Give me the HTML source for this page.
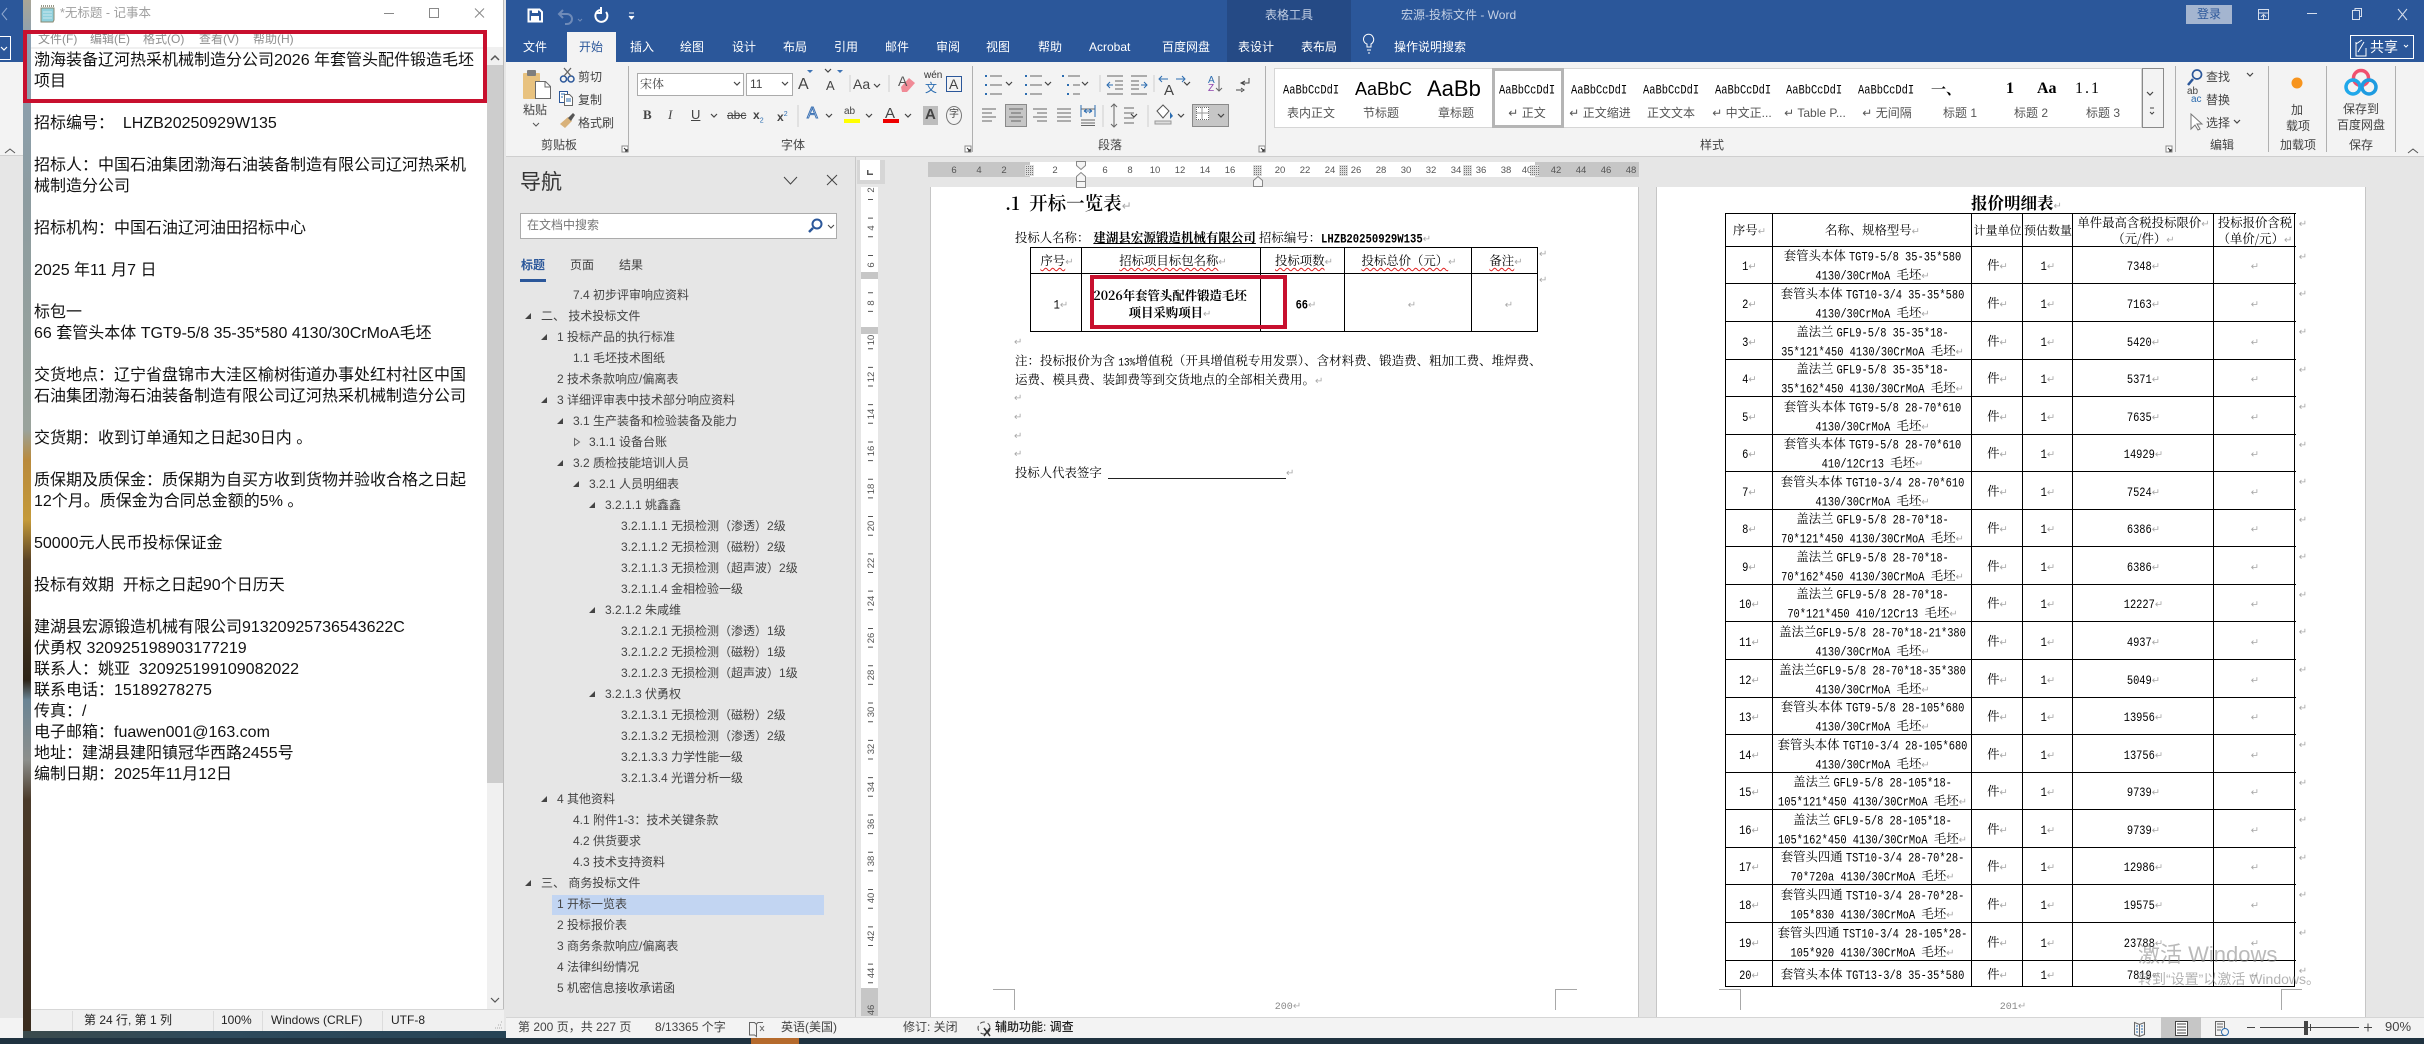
<!DOCTYPE html>
<html lang="zh-CN"><head><meta charset="utf-8"><title>宏源-投标文件 - Word</title>
<style>
*{margin:0;padding:0;box-sizing:border-box}
html,body{width:2424px;height:1044px;overflow:hidden;background:#e6e6e6}
body{position:relative;font-family:"Liberation Sans","Noto Sans CJK SC",sans-serif;font-size:12px;color:#444}
.a{position:absolute}
.t{position:absolute;white-space:nowrap;line-height:16px;height:16px}
.c{transform:translateX(-50%)}
.w{color:#fff}
.l{color:#c4d0e4}
.g{color:#8f8f8f}
svg{position:absolute;left:0;top:0}
#np pre{position:absolute;left:34px;top:49.5px;font-family:"Liberation Sans","Noto Sans CJK SC",sans-serif;font-size:16px;line-height:21px;color:#111;white-space:pre}
.n{color:#444}
.s{font-family:"Noto Serif CJK SC","Liberation Serif",serif;color:#111}
em{font:normal 10px "DejaVu Sans",sans-serif;color:#a8a8a8}
i{font:normal 10.4px "Liberation Mono",monospace;display:inline-block;white-space:pre;transform:scaleY(1.2)}
.doc{font-family:"Noto Serif CJK SC","Liberation Serif",serif;font-size:12.4px;color:#000}
.wv{text-decoration:underline wavy #e02020 1px;text-underline-offset:2px}
.r{position:absolute;left:0;width:570px;border-top:1px solid #000}
.r p{position:absolute;top:50%;transform:translateY(-50%);text-align:center;white-space:nowrap;line-height:19px}
.r .p1{left:0;width:47px}.r .p2{left:47px;width:199px}.r .p3{left:246px;width:51px}.r .p4{left:297px;width:50px}.r .p5{left:347px;width:141px}.r .p6{left:488px;width:82px}
.r .z{left:571px;top:1px;transform:none;width:12px;line-height:14px}
.v{position:absolute;top:0;width:1px;background:#000}
.st{position:absolute;white-space:nowrap;line-height:16px;height:16px;transform:translateX(-50%);color:#555}
.pv{position:absolute;overflow:hidden;white-space:nowrap;color:#000;height:26px;line-height:26px;top:76px}
</style></head><body>

<!-- word behind left strip -->
<div class="a" style="left:0;top:0;width:23px;height:62px;background:#2b579a"></div>
<div class="a" style="left:0;top:62px;width:23px;height:94px;background:#f3f3f3;border-bottom:1px solid #d0d0d0"></div>
<div class="a" style="left:0;top:36px;width:11px;height:24px;border:1px solid #fff;border-left:0"></div>
<div class="a" style="left:0;top:1018px;width:23px;height:20px;background:#f3f3f3"></div>
<div class="a" style="left:23px;top:0;width:8px;height:1031px;background:linear-gradient(#a9a596 0,#8ba0b3 40px,#8d9ca0 200px,#9aa39c 430px,#b98a3c 460px,#c49a3a 520px,#5b4426 560px,#2d2418 680px,#6a8494 700px,#8d8f8c 760px,#4a3a2a 800px,#3a2c1e 1031px)"></div>
<div class="a" style="left:0;top:1038px;width:2424px;height:6px;background:#1f3240"></div>
<div class="a" style="left:23px;top:1031px;width:483px;height:7px;background:linear-gradient(90deg,#3b4a4c,#2e4a5c 40%,#274456)"></div>
<div class="a" style="left:751px;top:1038px;width:48px;height:6px;background:#b56a2c"></div>

<!-- notepad -->
<div id="np" class="a" style="left:0;top:0;width:506px;height:1031px">
<div class="a" style="left:31px;top:0;width:473px;height:1031px;background:#fff;border-right:1px solid #bbb"></div>
<div class="t" style="left:60px;top:5px;color:#a0a0a0;font-size:12.5px">*无标题 - 记事本</div>
<div class="t g" style="left:38px;top:31px">文件(F)</div>
<div class="t g" style="left:90px;top:31px">编辑(E)</div>
<div class="t g" style="left:143px;top:31px">格式(O)</div>
<div class="t g" style="left:199px;top:31px">查看(V)</div>
<div class="t g" style="left:253px;top:31px">帮助(H)</div>
<div class="a" style="left:31px;top:47px;width:472px;height:2px;background:#f0f0f0"></div>
<pre>渤海装备辽河热采机械制造分公司2026 年套管头配件锻造毛坯
项目

招标编号：  LHZB20250929W135

招标人：中国石油集团渤海石油装备制造有限公司辽河热采机
械制造分公司

招标机构：中国石油辽河油田招标中心

2025 年11 月7 日

标包一
66 套管头本体 TGT9-5/8 35-35*580 4130/30CrMoA毛坯

交货地点：辽宁省盘锦市大洼区榆树街道办事处红村社区中国
石油集团渤海石油装备制造有限公司辽河热采机械制造分公司

交货期：收到订单通知之日起30日内 。

质保期及质保金：质保期为自买方收到货物并验收合格之日起
12个月。质保金为合同总金额的5% 。

50000元人民币投标保证金

投标有效期  开标之日起90个日历天

建湖县宏源锻造机械有限公司91320925736543622C
伏勇权 320925198903177219
联系人：姚亚  320925199109082022
联系电话：15189278275
传真：/
电子邮箱：fuawen001@163.com
地址：建湖县建阳镇冠华西路2455号
编制日期：2025年11月12日</pre>
<div class="a" style="left:487px;top:48px;width:16px;height:961px;background:#f0f0f0"></div>
<div class="a" style="left:487px;top:65px;width:16px;height:718px;background:#cdcdcd"></div>
<div class="a" style="left:31px;top:1009px;width:473px;height:22px;background:#f0f0f0;border-top:1px solid #d7d7d7"></div>
<div class="t" style="left:84px;top:1012px;color:#222">第 24 行, 第 1 列</div>
<div class="t" style="left:221px;top:1012px;color:#222">100%</div>
<div class="t" style="left:271px;top:1012px;color:#222">Windows (CRLF)</div>
<div class="t" style="left:391px;top:1012px;color:#222">UTF-8</div>
<div class="a" style="left:72px;top:1011px;width:1px;height:20px;background:#dcdcdc"></div>
<div class="a" style="left:213px;top:1011px;width:1px;height:20px;background:#dcdcdc"></div>
<div class="a" style="left:262px;top:1011px;width:1px;height:20px;background:#dcdcdc"></div>
<div class="a" style="left:382px;top:1011px;width:1px;height:20px;background:#dcdcdc"></div>
</div>
<div class="a" style="left:23px;top:30px;width:464px;height:73px;border:4px solid #c8102e"></div>

<!-- word chrome -->
<div class="a" style="left:506px;top:0;width:1918px;height:62px;background:#2b579a"></div>
<div class="a" style="left:1227px;top:0;width:124px;height:62px;background:#254a85"></div>
<div class="a" style="left:567px;top:32px;width:49px;height:30px;background:#f3f3f3"></div>
<div class="a" style="left:506px;top:62px;width:1918px;height:95px;background:#f3f3f3;border-bottom:1px solid #cfcfcf"></div>
<div class="a" style="left:506px;top:1017px;width:1918px;height:21px;background:#f3f3f3;border-top:1px solid #d5d5d5"></div>
<div class="a" style="left:2161px;top:1017px;width:40px;height:21px;background:#c6c6c6"></div>

<div class="t w" style="left:523px;top:39px">文件</div>
<div class="t" style="left:579px;top:39px;color:#2b579a">开始</div>
<div class="t w" style="left:630px;top:39px">插入</div>
<div class="t w" style="left:680px;top:39px">绘图</div>
<div class="t w" style="left:732px;top:39px">设计</div>
<div class="t w" style="left:783px;top:39px">布局</div>
<div class="t w" style="left:834px;top:39px">引用</div>
<div class="t w" style="left:885px;top:39px">邮件</div>
<div class="t w" style="left:936px;top:39px">审阅</div>
<div class="t w" style="left:986px;top:39px">视图</div>
<div class="t w" style="left:1038px;top:39px">帮助</div>
<div class="t w" style="left:1089px;top:39px">Acrobat</div>
<div class="t w" style="left:1162px;top:39px">百度网盘</div>
<div class="t w" style="left:1238px;top:39px">表设计</div>
<div class="t w" style="left:1301px;top:39px">表布局</div>
<div class="t w" style="left:1394px;top:39px">操作说明搜索</div>
<div class="t l" style="left:1265px;top:7px">表格工具</div>
<div class="t l" style="left:1401px;top:7px">宏源-投标文件 - Word</div>
<div class="a" style="left:2186px;top:5px;width:46px;height:19px;background:#a4b5d0;color:#2b579a;text-align:center;line-height:19px">登录</div>
<div class="a" style="left:2350px;top:35px;width:64px;height:24px;border:1px solid #fff"></div>
<div class="t w" style="left:2370px;top:39px;font-size:14px">共享</div>

<!-- clipboard group text -->
<div class="t n" style="left:523px;top:102px">粘贴</div>
<div class="t n" style="left:578px;top:69px">剪切</div>
<div class="t n" style="left:578px;top:92px">复制</div>
<div class="t n" style="left:578px;top:115px">格式刷</div>
<div class="t c n" style="left:559px;top:137px">剪贴板</div>
<div class="t c n" style="left:793px;top:137px">字体</div>
<div class="t c n" style="left:1110px;top:137px">段落</div>
<div class="t c n" style="left:1712px;top:137px">样式</div>
<div class="t c n" style="left:2222px;top:137px">编辑</div>
<div class="t c n" style="left:2298px;top:137px">加载项</div>
<div class="t c n" style="left:2361px;top:137px">保存</div>

<!-- font boxes -->
<div class="a" style="left:637px;top:73px;width:107px;height:23px;background:#fff;border:1px solid #ababab"></div>
<div class="a" style="left:746px;top:73px;width:47px;height:23px;background:#fff;border:1px solid #ababab"></div>
<div class="t n" style="left:640px;top:76px;font-family:'Noto Serif CJK SC',serif">宋体</div>
<div class="t n" style="left:750px;top:76px">11</div>
<div class="t n" style="left:798px;top:77px;font-size:16px">A</div>
<div class="t n" style="left:826px;top:78px;font-size:13px">A</div>
<div class="t n" style="left:853px;top:76px;font-size:14px">Aa</div>
<div class="t n" style="left:924px;top:68px;font-size:10px;color:#333">wén</div>
<div class="t" style="left:925px;top:80px;font-size:12px;color:#2b6cb0">文</div>
<div class="a" style="left:946px;top:76px;width:16px;height:16px;border:1px solid #2b579a"></div>
<div class="t n" style="left:949px;top:76px;font-size:14px">A</div>
<div class="t n" style="left:643px;top:107px;font-weight:bold;font-size:13px;font-family:'Liberation Serif',serif">B</div>
<div class="t n" style="left:668px;top:107px;font-style:italic;font-size:13px;font-family:'Liberation Serif',serif">I</div>
<div class="t n" style="left:691px;top:107px;font-size:13px;text-decoration:underline">U</div>
<div class="t n" style="left:727px;top:107px;text-decoration:line-through">abc</div>
<div class="t n" style="left:753px;top:107px;font-weight:bold">x<sub style="font-size:7px;color:#2b6cb0;font-weight:normal">2</sub></div>
<div class="t n" style="left:777px;top:107px;font-weight:bold">x<sup style="font-size:7px;color:#2b6cb0;font-weight:normal">2</sup></div>
<div class="t" style="left:807px;top:106px;font-size:16px;color:#fff;-webkit-text-stroke:1px #3f74b5">A</div>
<div class="t n" style="left:844px;top:104px;font-size:10px">ab</div>
<div class="t n" style="left:885px;top:106px;font-size:15px">A</div>
<div class="a" style="left:923px;top:106px;width:15px;height:19px;background:#bdbdbd"></div>
<div class="t n" style="left:925px;top:107px;font-size:15px;font-weight:bold">A</div>
<div class="t n" style="left:949px;top:107px;font-size:10px">字</div>
<div class="a" style="left:946px;top:106px;width:16px;height:19px;border:1px solid #777;border-radius:50%"></div>
<div class="a" style="left:844px;top:119px;width:16px;height:4px;background:#ff0"></div>
<div class="a" style="left:883px;top:119px;width:16px;height:4px;background:#e00"></div>
<div class="a" style="left:1005px;top:104px;width:22px;height:23px;background:#c6c6c6;border:1px solid #8a8a8a"></div>
<div class="a" style="left:1192px;top:104px;width:37px;height:23px;background:#c6c6c6;border:1px solid #8a8a8a"></div>
<div class="a" style="left:1196px;top:107px;width:13px;height:13px;background:#fff;border:1px dotted #666"></div>

<!-- styles gallery -->
<div class="a" style="left:1274px;top:68px;width:868px;height:60px;background:#fff;border:1px solid #d6d6d6"></div>
<div class="a" style="left:1492px;top:68px;width:72px;height:60px;background:#fff;border:3px solid #b5b5b5"></div>
<div class="a" style="left:2142px;top:68px;width:22px;height:60px;background:#f3f3f3;border:1px solid #8a8a8a"></div>
<div class="pv" style="left:1283px;width:60px"><i>AaBbCcDdI</i></div>
<div class="pv" style="left:1355px;width:60px;font-size:18px">AaBbC</div>
<div class="pv" style="left:1427px;width:60px;font-size:22px">AaBb</div>
<div class="pv" style="left:1499px;width:59px"><i>AaBbCcDdI</i></div>
<div class="pv" style="left:1571px;width:60px"><i>AaBbCcDdI</i></div>
<div class="pv" style="left:1643px;width:59px"><i>AaBbCcDdI</i></div>
<div class="pv" style="left:1715px;width:59px"><i>AaBbCcDdI</i></div>
<div class="pv" style="left:1786px;width:59px"><i>AaBbCcDdI</i></div>
<div class="pv" style="left:1858px;width:59px"><i>AaBbCcDdI</i></div>
<div class="pv" style="left:1931px;width:40px;font-size:15px;font-family:'Noto Serif CJK SC',serif;font-weight:bold">一、</div>
<div class="pv" style="left:2006px;width:12px;font-size:16px;font-family:'Liberation Serif',serif;font-weight:bold">1</div>
<div class="pv" style="left:2037px;width:30px;font-size:16px;font-family:'Liberation Serif',serif;font-weight:bold">Aa</div>
<div class="pv" style="left:2075px;width:40px;font-size:16px;font-family:'Liberation Serif',serif;letter-spacing:2px">1.1</div>
<div class="st" style="left:1311px;top:105px">表内正文</div>
<div class="st" style="left:1381px;top:105px">节标题</div>
<div class="st" style="left:1456px;top:105px">章标题</div>
<div class="st" style="left:1527px;top:105px">↵ 正文</div>
<div class="st" style="left:1600px;top:105px">↵ 正文缩进</div>
<div class="st" style="left:1671px;top:105px">正文文本</div>
<div class="st" style="left:1742px;top:105px">↵ 中文正...</div>
<div class="st" style="left:1815px;top:105px">↵ Table P...</div>
<div class="st" style="left:1887px;top:105px">↵ 无间隔</div>
<div class="st" style="left:1960px;top:105px">标题 1</div>
<div class="st" style="left:2031px;top:105px">标题 2</div>
<div class="st" style="left:2103px;top:105px">标题 3</div>
<!-- editing -->
<div class="t n" style="left:2206px;top:69px">查找</div>
<div class="t n" style="left:2206px;top:92px">替换</div>
<div class="t n" style="left:2206px;top:115px">选择</div>
<div class="t c n" style="left:2297px;top:102px">加</div>
<div class="t c n" style="left:2298px;top:118px">载项</div>
<div class="t c n" style="left:2361px;top:101px">保存到</div>
<div class="t c n" style="left:2361px;top:117px">百度网盘</div>
<div class="t" style="left:2187px;top:88px;font-size:10px;color:#444;line-height:8px">ab</div>
<div class="t" style="left:2191px;top:96px;font-size:10px;color:#2b6cb0;line-height:8px">ac</div>

<!-- rulers -->
<div class="a" style="left:928px;top:162px;width:711px;height:15px;background:#c6c6c6"></div>
<div class="a" style="left:1030px;top:162px;width:505px;height:15px;background:#fff"></div>
<div class="a" style="left:857px;top:160px;width:28px;height:24px;background:#d6d6d6"></div>
<div class="a" style="left:860px;top:160px;width:20px;height:20px;background:#fff"></div>
<div class="a" style="left:861px;top:187px;width:17px;height:801px;background:#fff"></div>
<div class="a" style="left:861px;top:988px;width:17px;height:28px;background:#c6c6c6"></div>

<!-- navigation -->
<div class="a" style="left:855px;top:157px;width:1px;height:860px;background:#c8c8c8"></div>
<div class="t" style="left:520px;top:171px;font-size:21px;line-height:24px;height:24px;color:#333">导航</div>
<div class="a" style="left:520px;top:213px;width:317px;height:26px;background:#fff;border:1px solid #ababab"></div>
<div class="t" style="left:527px;top:217px;color:#777">在文档中搜索</div>
<div class="t" style="left:521px;top:257px;color:#2b579a;font-weight:bold">标题</div>
<div class="t n" style="left:570px;top:257px">页面</div>
<div class="t n" style="left:619px;top:257px">结果</div>
<div class="a" style="left:520px;top:279px;width:26px;height:3px;background:#2b579a"></div>
<div class="a" style="left:552px;top:895px;width:272px;height:20px;background:#c2d5f2"></div>

<div class="t n" style="left:573px;top:287px">7.4 初步评审响应资料</div>
<div class="t n" style="left:541px;top:308px">二、 技术投标文件</div>
<div class="t n" style="left:557px;top:329px">1 投标产品的执行标准</div>
<div class="t n" style="left:573px;top:350px">1.1 毛坯技术图纸</div>
<div class="t n" style="left:557px;top:371px">2 技术条款响应/偏离表</div>
<div class="t n" style="left:557px;top:392px">3 详细评审表中技术部分响应资料</div>
<div class="t n" style="left:573px;top:413px">3.1 生产装备和检验装备及能力</div>
<div class="t n" style="left:589px;top:434px">3.1.1 设备台账</div>
<div class="t n" style="left:573px;top:455px">3.2 质检技能培训人员</div>
<div class="t n" style="left:589px;top:476px">3.2.1 人员明细表</div>
<div class="t n" style="left:605px;top:497px">3.2.1.1 姚鑫鑫</div>
<div class="t n" style="left:621px;top:518px">3.2.1.1.1 无损检测（渗透）2级</div>
<div class="t n" style="left:621px;top:539px">3.2.1.1.2 无损检测（磁粉）2级</div>
<div class="t n" style="left:621px;top:560px">3.2.1.1.3 无损检测（超声波）2级</div>
<div class="t n" style="left:621px;top:581px">3.2.1.1.4 金相检验一级</div>
<div class="t n" style="left:605px;top:602px">3.2.1.2 朱咸维</div>
<div class="t n" style="left:621px;top:623px">3.2.1.2.1 无损检测（渗透）1级</div>
<div class="t n" style="left:621px;top:644px">3.2.1.2.2 无损检测（磁粉）1级</div>
<div class="t n" style="left:621px;top:665px">3.2.1.2.3 无损检测（超声波）1级</div>
<div class="t n" style="left:605px;top:686px">3.2.1.3 伏勇权</div>
<div class="t n" style="left:621px;top:707px">3.2.1.3.1 无损检测（磁粉）2级</div>
<div class="t n" style="left:621px;top:728px">3.2.1.3.2 无损检测（渗透）2级</div>
<div class="t n" style="left:621px;top:749px">3.2.1.3.3 力学性能一级</div>
<div class="t n" style="left:621px;top:770px">3.2.1.3.4 光谱分析一级</div>
<div class="t n" style="left:557px;top:791px">4 其他资料</div>
<div class="t n" style="left:573px;top:812px">4.1 附件1-3：技术关键条款</div>
<div class="t n" style="left:573px;top:833px">4.2 供货要求</div>
<div class="t n" style="left:573px;top:854px">4.3 技术支持资料</div>
<div class="t n" style="left:541px;top:875px">三、 商务投标文件</div>
<div class="t n" style="left:557px;top:896px">1 开标一览表</div>
<div class="t n" style="left:557px;top:917px">2 投标报价表</div>
<div class="t n" style="left:557px;top:938px">3 商务条款响应/偏离表</div>
<div class="t n" style="left:557px;top:959px">4 法律纠纷情况</div>
<div class="t n" style="left:557px;top:980px">5 机密信息接收承诺函</div>

<!-- status -->
<div class="t n" style="left:518px;top:1019px">第 200 页，共 227 页</div>
<div class="t n" style="left:655px;top:1019px">8/13365 个字</div>
<div class="t n" style="left:781px;top:1019px">英语(美国)</div>
<div class="t n" style="left:903px;top:1019px">修订: 关闭</div>
<div class="t" style="left:995px;top:1019px;color:#222;font-weight:500">辅助功能: 调查</div>
<div class="t n" style="left:2385px;top:1019px;font-size:13px">90%</div>

<!-- page 1 -->
<div class="a" style="left:930px;top:187px;width:709px;height:830px;background:#fff;border:1px solid #c6c6c6;border-top:0;border-bottom:0"></div>
<div class="t s" style="left:1005px;top:191px;font-size:18.5px;line-height:24px;height:24px;font-weight:600;color:#000">.1&nbsp; 开标一览表<em style="font-size:12px">↵</em></div>
<div class="t doc" style="left:1015px;top:229px">投标人名称：<b style="margin-left:4px;text-decoration:underline;font-size:12.5px">建湖县宏源锻造机械有限公司</b> 招标编号：<b style="text-decoration:underline"><i style="font-weight:bold;font-size:10.6px">LHZB20250929W135</i></b><em>↵</em></div>

<div class="a" style="left:1030px;top:247px;width:508px;height:85px;border:1px solid #000"></div>
<div class="a" style="left:1030px;top:273px;width:508px;height:1px;background:#000"></div>
<div class="a" style="left:1081px;top:247px;width:1px;height:85px;background:#000"></div>
<div class="a" style="left:1260px;top:247px;width:1px;height:85px;background:#000"></div>
<div class="a" style="left:1344px;top:247px;width:1px;height:85px;background:#000"></div>
<div class="a" style="left:1471px;top:247px;width:1px;height:85px;background:#000"></div>
<div class="t doc c" style="left:1057px;top:252px"><span class="wv">序号</span><em>↵</em></div>
<div class="t doc c" style="left:1173px;top:252px"><span class="wv">招标项目标包名称</span><em>↵</em></div>
<div class="t doc c" style="left:1304px;top:252px"><span class="wv">投标项数</span><em>↵</em></div>
<div class="t doc c" style="left:1409px;top:252px"><span class="wv">投标总价（元）</span><em>↵</em></div>
<div class="t doc c" style="left:1506px;top:252px"><span class="wv">备注</span><em>↵</em></div>
<div class="t doc c" style="left:1061px;top:295px"><i>1</i><em>↵</em></div>
<div class="t doc c" style="left:1170px;top:287px;font-weight:bold">2026年套管头配件锻造毛坯</div>
<div class="t doc c" style="left:1170px;top:304px;font-weight:bold">项目采购项目<em>↵</em></div>
<div class="t doc c" style="left:1306px;top:295px;font-weight:bold"><i style="font-weight:bold">66</i><em>↵</em></div>
<div class="t doc c" style="left:1412px;top:295px"><em>↵</em></div>
<div class="t doc c" style="left:1509px;top:295px"><em>↵</em></div>
<div class="t" style="left:1539px;top:245px"><em>↵</em></div>
<div class="t" style="left:1539px;top:271px"><em>↵</em></div>
<div class="a" style="left:1090px;top:275px;width:197px;height:54px;border:4px solid #c8102e"></div>
<div class="t" style="left:1014px;top:333px"><em>↵</em></div>
<div class="t doc" style="left:1015px;top:352px;font-size:12.5px">注：投标报价为含 <i style="font-size:9.5px">13%</i>增值税（开具增值税专用发票）、含材料费、锻造费、粗加工费、堆焊费、</div>
<div class="t doc" style="left:1015px;top:371px;font-size:12.5px">运费、模具费、装卸费等到交货地点的全部相关费用。<em>↵</em></div>
<div class="t" style="left:1014px;top:389px"><em>↵</em></div>
<div class="t" style="left:1014px;top:408px"><em>↵</em></div>
<div class="t" style="left:1014px;top:427px"><em>↵</em></div>
<div class="t" style="left:1014px;top:445px"><em>↵</em></div>
<div class="t doc" style="left:1015px;top:464px">投标人代表签字</div>
<div class="a" style="left:1108px;top:478px;width:178px;height:1px;background:#222"></div>
<div class="t" style="left:1286px;top:464px"><em>↵</em></div>
<div class="t c" style="left:1288px;top:1000px;font-size:10px;font-family:'Liberation Mono',monospace;color:#888">200<em>↵</em></div>

<!-- page 2 -->
<div class="a" style="left:1656px;top:187px;width:710px;height:830px;background:#fff;border:1px solid #c6c6c6;border-top:0;border-bottom:0"></div>
<div class="t doc" style="left:1971px;top:194px;font-size:16.5px;font-weight:bold;color:#000">报价明细表<em>↵</em></div>
<div class="a doc" style="left:1725px;top:213px;width:570px;height:774px;border-right:1px solid #000;border-left:1px solid #000;border-bottom:1px solid #000">
<div class="r" style="top:0;height:33px"><p class="p1">序号<em>↵</em></p><p class="p2">名称、规格型号<em>↵</em></p><p class="p3" style="font-size:12px">计量单位</p><p class="p4" style="font-size:12px">预估数量</p><p class="p5" style="line-height:16px">单件最高含税投标限价<em>↵</em><br>（元/件）<em>↵</em></p><p class="p6" style="line-height:16px">投标报价含税<br>（单价/元）<em>↵</em></p><p class="z"><em>↵</em></p></div>
<div class="r" style="top:33px;height:37px"><p class="p1"><i>1</i><em>↵</em></p><p class="p2">套管头本体 <i>TGT9-5/8 35-35*580</i><br><i>4130/30CrMoA </i>毛坯<em>↵</em></p><p class="p3">件<em>↵</em></p><p class="p4"><i>1</i><em>↵</em></p><p class="p5"><i>7348</i><em>↵</em></p><p class="p6"><em>↵</em></p><p class="z"><em>↵</em></p></div>
<div class="r" style="top:70px;height:38px"><p class="p1"><i>2</i><em>↵</em></p><p class="p2">套管头本体 <i>TGT10-3/4 35-35*580</i><br><i>4130/30CrMoA </i>毛坯<em>↵</em></p><p class="p3">件<em>↵</em></p><p class="p4"><i>1</i><em>↵</em></p><p class="p5"><i>7163</i><em>↵</em></p><p class="p6"><em>↵</em></p><p class="z"><em>↵</em></p></div>
<div class="r" style="top:108px;height:38px"><p class="p1"><i>3</i><em>↵</em></p><p class="p2">盖法兰 <i>GFL9-5/8 35-35*18-</i><br><i>35*121*450 4130/30CrMoA </i>毛坯<em>↵</em></p><p class="p3">件<em>↵</em></p><p class="p4"><i>1</i><em>↵</em></p><p class="p5"><i>5420</i><em>↵</em></p><p class="p6"><em>↵</em></p><p class="z"><em>↵</em></p></div>
<div class="r" style="top:146px;height:37px"><p class="p1"><i>4</i><em>↵</em></p><p class="p2">盖法兰 <i>GFL9-5/8 35-35*18-</i><br><i>35*162*450 4130/30CrMoA </i>毛坯<em>↵</em></p><p class="p3">件<em>↵</em></p><p class="p4"><i>1</i><em>↵</em></p><p class="p5"><i>5371</i><em>↵</em></p><p class="p6"><em>↵</em></p><p class="z"><em>↵</em></p></div>
<div class="r" style="top:183px;height:38px"><p class="p1"><i>5</i><em>↵</em></p><p class="p2">套管头本体 <i>TGT9-5/8 28-70*610</i><br><i>4130/30CrMoA </i>毛坯<em>↵</em></p><p class="p3">件<em>↵</em></p><p class="p4"><i>1</i><em>↵</em></p><p class="p5"><i>7635</i><em>↵</em></p><p class="p6"><em>↵</em></p><p class="z"><em>↵</em></p></div>
<div class="r" style="top:221px;height:37px"><p class="p1"><i>6</i><em>↵</em></p><p class="p2">套管头本体 <i>TGT9-5/8 28-70*610</i><br><i>410/12Cr13 </i>毛坯<em>↵</em></p><p class="p3">件<em>↵</em></p><p class="p4"><i>1</i><em>↵</em></p><p class="p5"><i>14929</i><em>↵</em></p><p class="p6"><em>↵</em></p><p class="z"><em>↵</em></p></div>
<div class="r" style="top:258px;height:38px"><p class="p1"><i>7</i><em>↵</em></p><p class="p2">套管头本体 <i>TGT10-3/4 28-70*610</i><br><i>4130/30CrMoA </i>毛坯<em>↵</em></p><p class="p3">件<em>↵</em></p><p class="p4"><i>1</i><em>↵</em></p><p class="p5"><i>7524</i><em>↵</em></p><p class="p6"><em>↵</em></p><p class="z"><em>↵</em></p></div>
<div class="r" style="top:296px;height:37px"><p class="p1"><i>8</i><em>↵</em></p><p class="p2">盖法兰 <i>GFL9-5/8 28-70*18-</i><br><i>70*121*450 4130/30CrMoA </i>毛坯<em>↵</em></p><p class="p3">件<em>↵</em></p><p class="p4"><i>1</i><em>↵</em></p><p class="p5"><i>6386</i><em>↵</em></p><p class="p6"><em>↵</em></p><p class="z"><em>↵</em></p></div>
<div class="r" style="top:333px;height:38px"><p class="p1"><i>9</i><em>↵</em></p><p class="p2">盖法兰 <i>GFL9-5/8 28-70*18-</i><br><i>70*162*450 4130/30CrMoA </i>毛坯<em>↵</em></p><p class="p3">件<em>↵</em></p><p class="p4"><i>1</i><em>↵</em></p><p class="p5"><i>6386</i><em>↵</em></p><p class="p6"><em>↵</em></p><p class="z"><em>↵</em></p></div>
<div class="r" style="top:371px;height:37px"><p class="p1"><i>10</i><em>↵</em></p><p class="p2">盖法兰 <i>GFL9-5/8 28-70*18-</i><br><i>70*121*450 410/12Cr13 </i>毛坯<em>↵</em></p><p class="p3">件<em>↵</em></p><p class="p4"><i>1</i><em>↵</em></p><p class="p5"><i>12227</i><em>↵</em></p><p class="p6"><em>↵</em></p><p class="z"><em>↵</em></p></div>
<div class="r" style="top:408px;height:38px"><p class="p1"><i>11</i><em>↵</em></p><p class="p2">盖法兰<i>GFL9-5/8 28-70*18-21*380</i><br><i>4130/30CrMoA </i>毛坯<em>↵</em></p><p class="p3">件<em>↵</em></p><p class="p4"><i>1</i><em>↵</em></p><p class="p5"><i>4937</i><em>↵</em></p><p class="p6"><em>↵</em></p><p class="z"><em>↵</em></p></div>
<div class="r" style="top:446px;height:38px"><p class="p1"><i>12</i><em>↵</em></p><p class="p2">盖法兰<i>GFL9-5/8 28-70*18-35*380</i><br><i>4130/30CrMoA </i>毛坯<em>↵</em></p><p class="p3">件<em>↵</em></p><p class="p4"><i>1</i><em>↵</em></p><p class="p5"><i>5049</i><em>↵</em></p><p class="p6"><em>↵</em></p><p class="z"><em>↵</em></p></div>
<div class="r" style="top:484px;height:37px"><p class="p1"><i>13</i><em>↵</em></p><p class="p2">套管头本体 <i>TGT9-5/8 28-105*680</i><br><i>4130/30CrMoA </i>毛坯<em>↵</em></p><p class="p3">件<em>↵</em></p><p class="p4"><i>1</i><em>↵</em></p><p class="p5"><i>13956</i><em>↵</em></p><p class="p6"><em>↵</em></p><p class="z"><em>↵</em></p></div>
<div class="r" style="top:521px;height:38px"><p class="p1"><i>14</i><em>↵</em></p><p class="p2">套管头本体 <i>TGT10-3/4 28-105*680</i><br><i>4130/30CrMoA </i>毛坯<em>↵</em></p><p class="p3">件<em>↵</em></p><p class="p4"><i>1</i><em>↵</em></p><p class="p5"><i>13756</i><em>↵</em></p><p class="p6"><em>↵</em></p><p class="z"><em>↵</em></p></div>
<div class="r" style="top:559px;height:37px"><p class="p1"><i>15</i><em>↵</em></p><p class="p2">盖法兰 <i>GFL9-5/8 28-105*18-</i><br><i>105*121*450 4130/30CrMoA </i>毛坯<em>↵</em></p><p class="p3">件<em>↵</em></p><p class="p4"><i>1</i><em>↵</em></p><p class="p5"><i>9739</i><em>↵</em></p><p class="p6"><em>↵</em></p><p class="z"><em>↵</em></p></div>
<div class="r" style="top:596px;height:38px"><p class="p1"><i>16</i><em>↵</em></p><p class="p2">盖法兰 <i>GFL9-5/8 28-105*18-</i><br><i>105*162*450 4130/30CrMoA </i>毛坯<em>↵</em></p><p class="p3">件<em>↵</em></p><p class="p4"><i>1</i><em>↵</em></p><p class="p5"><i>9739</i><em>↵</em></p><p class="p6"><em>↵</em></p><p class="z"><em>↵</em></p></div>
<div class="r" style="top:634px;height:37px"><p class="p1"><i>17</i><em>↵</em></p><p class="p2">套管头四通 <i>TST10-3/4 28-70*28-</i><br><i>70*720a 4130/30CrMoA </i>毛坯<em>↵</em></p><p class="p3">件<em>↵</em></p><p class="p4"><i>1</i><em>↵</em></p><p class="p5"><i>12986</i><em>↵</em></p><p class="p6"><em>↵</em></p><p class="z"><em>↵</em></p></div>
<div class="r" style="top:671px;height:38px"><p class="p1"><i>18</i><em>↵</em></p><p class="p2">套管头四通 <i>TST10-3/4 28-70*28-</i><br><i>105*830 4130/30CrMoA </i>毛坯<em>↵</em></p><p class="p3">件<em>↵</em></p><p class="p4"><i>1</i><em>↵</em></p><p class="p5"><i>19575</i><em>↵</em></p><p class="p6"><em>↵</em></p><p class="z"><em>↵</em></p></div>
<div class="r" style="top:709px;height:38px"><p class="p1"><i>19</i><em>↵</em></p><p class="p2">套管头四通 <i>TST10-3/4 28-105*28-</i><br><i>105*920 4130/30CrMoA </i>毛坯<em>↵</em></p><p class="p3">件<em>↵</em></p><p class="p4"><i>1</i><em>↵</em></p><p class="p5"><i>23788</i><em>↵</em></p><p class="p6"><em>↵</em></p><p class="z"><em>↵</em></p></div>
<div class="r" style="top:747px;height:26px"><p class="p1"><i>20</i><em>↵</em></p><p class="p2">套管头本体 <i>TGT13-3/8 35-35*580</i></p><p class="p3">件<em>↵</em></p><p class="p4"><i>1</i><em>↵</em></p><p class="p5"><i>7819</i><em>↵</em></p><p class="p6"><em>↵</em></p><p class="z"><em>↵</em></p></div>
<div class="v" style="left:46px;height:773px"></div>
<div class="v" style="left:245px;height:773px"></div>
<div class="v" style="left:296px;height:773px"></div>
<div class="v" style="left:346px;height:773px"></div>
<div class="v" style="left:487px;height:773px"></div>
</div>
<div class="t c" style="left:2013px;top:1000px;font-size:10px;font-family:'Liberation Mono',monospace;color:#888">201<em>↵</em></div>

<!-- watermark -->
<div class="t" style="left:2138px;top:942px;font-size:22px;line-height:26px;height:26px;color:rgba(130,130,130,.55)">激活 Windows</div>
<div class="t" style="left:2138px;top:971px;font-size:14px;color:rgba(130,130,130,.6)">转到“设置”以激活 Windows。</div>

<!-- icon overlay -->
<svg width="2424" height="1044" viewBox="0 0 2424 1044" fill="none">
<defs><pattern id="h" width="2" height="2" patternUnits="userSpaceOnUse"><rect width="2" height="2" fill="#ddd"/><rect width="1" height="1" fill="#777"/></pattern></defs>
<!-- left behind bits -->
<path d="M7 8l-5 6 5 6" stroke="#8fa8cf" stroke-width="1"/><path d="M1 47l3 3 3-3" stroke="#fff" stroke-width="1.2"/><path d="M5 153l5-4 5 4" stroke="#555"/>
<!-- notepad icon & controls -->
<path d="M41 8h13v12l-1 2H41z" fill="#8fd0dc" stroke="#8a8a72"/><path d="M43 12h9M43 15h9M43 18h9" stroke="#cde8ee"/><path d="M41 6h14" stroke="#9a9a8a" stroke-dasharray="1 1" stroke-width="2"/>
<path d="M384 13.5h10" stroke="#888"/><rect x="429.5" y="8.5" width="9" height="9" stroke="#888"/><path d="M475 8.5l9 9M484 8.5l-9 9" stroke="#888"/>
<path d="M491 60l4-4 4 4" stroke="#555" stroke-width="1.5"/><path d="M491 998l4 4 4-4" stroke="#555" stroke-width="1.2"/>
<path d="M495 1028h7M498 1025h4M501 1022h1" stroke="#aaa" stroke-dasharray="1 1"/>
<!-- QAT -->
<path d="M528.5 9.5h11l2.5 2.5v9.5h-13.500z" stroke="#fff" stroke-width="2"/><rect x="532" y="9" width="6" height="4" fill="#fff"/><rect x="531" y="16" width="8" height="5" fill="#fff"/>
<path d="M560 14h7a5 5 0 0 1 0 10h-2M563 10l-4 4 4 4" stroke="#6f8bb8" stroke-width="2"/><path d="M578 19l2 2 2-2" stroke="#6f8bb8"/>
<path d="M600 10a6 6 0 1 0 6 2M601 7v6h-5" stroke="#fff" stroke-width="2"/><path d="M629 13h5M629 16l2.500 3 2.500-3" stroke="#fff" fill="#fff"/>
<!-- bulb -->
<path d="M1374 41a5 5 0 1 0-6 7v3h4v-3a5 5 0 0 0 2-7zM1368 54h4M1369 57h2" stroke="#fff" transform="translate(-1 -4)"/>
<!-- title controls -->
<rect x="2258.500" y="9.500" width="10" height="10" stroke="#d6deec"/><path d="M2258 13h11M2263.500 20v-5M2261 17l2.500-2.500 2.500 2.500" stroke="#d6deec"/>
<path d="M2307 13.500h10" stroke="#d6deec"/><rect x="2352.500" y="10.500" width="7" height="9" stroke="#d6deec"/><path d="M2355 10V8.500h6.500v8H2360" stroke="#d6deec"/>
<path d="M2398 9l9 11M2407 9l-9 11" stroke="#d6deec"/>
<path d="M2356 44l6-4M2356 42v14h10v-8M2358 52l6-10" stroke="#fff"/><path d="M2404 45l2 2 2-2" stroke="#fff"/>
<!-- clipboard -->
<rect x="523" y="73" width="17" height="26" rx="1" fill="#e8c27f"/><rect x="527" y="70" width="9" height="6" rx="1" fill="#7e7e7e"/><path d="M535.500 81.500h10l5 5v12h-15z" fill="#fff" stroke="#6a6a6a"/><path d="M545 82v5h5" stroke="#6a6a6a"/><path d="M533 123l3 3 3-3" stroke="#555"/>
<circle cx="563.500" cy="79" r="3" stroke="#2b579a" stroke-width="1.500"/><circle cx="571" cy="79" r="3" stroke="#2b579a" stroke-width="1.500"/><path d="M564 76l7-8M571 76l-7-8" stroke="#666" stroke-width="1.300"/>
<path d="M559.500 91.500h8v11h-8z" fill="#fff" stroke="#2b579a"/><path d="M564.500 94.500h5l3 3v8h-8z" fill="#fff" stroke="#666"/><path d="M566 99h5M566 101h5M561 94h4M561 97h2" stroke="#2b6cb0"/>
<path d="M560 124l8-7 4 4-7 7z" fill="#d9b27a"/><path d="M568 118l5-5 2 2-4 6z" fill="#555"/>
<path d="M622 146h6v6h-6z" stroke="#888" fill="#fff"/><path d="M624 148l3 3M627 149v2h-2" stroke="#333"/><path d="M965 146h6v6h-6z" stroke="#888" fill="#fff"/><path d="M967 148l3 3M970 149v2h-2" stroke="#333"/>
<path d="M1259 146h6v6h-6z" stroke="#888" fill="#fff"/><path d="M1261 148l3 3M1264 149v2h-2" stroke="#333"/><path d="M2166 146h6v6h-6z" stroke="#888" fill="#fff"/><path d="M2168 148l3 3M2171 149v2h-2" stroke="#333"/>
<!-- carets -->
<path d="M734 82l3 3 3-3M782 82l3 3 3-3M874 84l3 3 3-3M711 114l3 3 3-3M826 114l3 3 3-3M866 114l3 3 3-3M905 114l3 3 3-3M1006 82l3 3 3-3M1045 82l3 3 3-3M1082 82l3 3 3-3M1184 82l3 3 3-3M1131 114l3 3 3-3M1178 114l3 3 3-3M1218 114l3 3 3-3M825 69l3 3 3-3M2147 92l3 3 3-3M2247 73l3 3 3-3M2234 120l3 3 3-3" stroke="#444" stroke-width="1.200"/>
<path d="M2173 95v0" stroke="#444"/>
<path d="M810 83l-3-3h6zM840 83l-3-3h6z" stroke="none" transform="translate(0 -10)" fill="#3f74b5"/>
<path d="M850 75v17M889 75v17M798 105v22M1100 75v17M1154 75v17M1103 105v22M1148 105v22" stroke="#cfcfcf"/>
<!-- eraser -->
<path d="M901 87l8-9 6 5-8 9h-5z" fill="#f08a96"/><text x="898" y="86" font-size="14" font-family="Liberation Sans" fill="#555">A</text>
<!-- paragraph icons -->
<path d="M990 76h12M990 85h12M990 94h12M1030 76h12M1030 85h12M1030 94h12M1068 76h12M1073 85h7M1073 94h7" stroke="#666"/>
<path d="M985 76h2M985 85h2M985 94h2M1025 76h2M1025 85h2M1025 94h2M1062 76h2M1067 85h2M1067 94h2" stroke="#2b6cb0" stroke-width="2"/>
<path d="M1107 76h16M1115 81h8M1115 85h8M1115 89h8M1107 94h16M1131 76h16M1131 81h8M1131 85h8M1131 89h8M1131 94h16" stroke="#666"/>
<path d="M1113 85h-6m3-3l-3 3 3 3M1141 85h6m-3-3l3 3-3 3" stroke="#2b6cb0"/>
<text x="1164" y="95" font-size="15" font-family="Liberation Sans" fill="#444">A</text><path d="M1162 76l-3 3 3 3M1182 76l3 3-3 3M1160 79h8M1176 79h8" stroke="#2b6cb0"/>
<path d="M982 109h14M982 113h10M982 117h14M982 121h10M1009 109h14M1011 113h10M1009 117h14M1011 121h10M1033 109h14M1037 113h10M1033 117h14M1037 121h10M1057 109h14M1057 113h14M1057 117h14M1057 121h14" stroke="#666"/>
<path d="M1081 109h14M1081 120h14M1081 123h14M1081 125.500h14" stroke="#666"/><path d="M1081 105v12M1095 105v12M1084 111h8M1084 111l3-2M1084 111l3 2M1092 111l-3-2M1092 111l-3 2" stroke="#2b6cb0"/>
<path d="M1124 108h10M1124 113h10M1124 118h10M1124 123h10M1114 104v23M1111 107l3-3 3 3M1111 124l3 3 3-3" stroke="#666"/>
<path d="M1157 111l6-6 6 6-6 7z" fill="#fff" stroke="#555"/><path d="M1155 121h16v3h-16z" fill="#ddd" stroke="#999"/><path d="M1170 112l3 4-3 3z" fill="#2b6cb0"/>
<path d="M1202 107v12M1196 113h13" stroke="#999"/>
<text x="1208" y="83" font-size="10" font-family="Liberation Sans" fill="#2b6cb0">A</text><text x="1208" y="91" font-size="10" font-family="Liberation Sans" fill="#8e44ad">Z</text><path d="M1219 76v15M1216 88l3 3 3-3" stroke="#666"/>
<path d="M1245 81l-4 2 4 2M1241 83h8v-5M1242 90h-6M1241 88l3 2-3 2" stroke="#444"/>
<!-- group dividers -->
<path d="M628.500 66v86M972.500 66v86M1265.500 66v86M2175.500 66v86M2268.500 66v86M2326.500 66v86M2395.500 66v86" stroke="#b0b0b0"/>
<path d="M2408 153l5-4 5 4" stroke="#555"/>
<!-- editing icons -->
<circle cx="2197" cy="74.500" r="4.500" stroke="#2b579a" stroke-width="1.700"/><path d="M2193 79l-5 6" stroke="#2b579a" stroke-width="2.500"/>
<path d="M2191 114v15l4-4 3 5 2-1-3-5h5z" fill="#fff" stroke="#777"/>
<!-- addin & baidu -->
<circle cx="2297" cy="83" r="5.500" fill="#f7941d"/>
<circle cx="2361" cy="78" r="7.500" stroke="#f0506e" stroke-width="3.500"/><circle cx="2353" cy="87" r="7" stroke="#20a8ea" stroke-width="3.500"/><circle cx="2369" cy="87" r="7" stroke="#1e9be0" stroke-width="3.500"/>
<!-- styles gallery arrow -->
<path d="M2150 108h4M2150 112l2 2 2-2" stroke="#444"/>
<!-- nav -->
<path d="M784 177l6.500 7 6.500-7M827 175l10 10M837 175l-10 10" stroke="#444"/>
<circle cx="817" cy="224" r="4.500" stroke="#2b579a" stroke-width="2"/><path d="M813 228l-4 4" stroke="#2b579a" stroke-width="2.500"/><path d="M828 225l3 3 3-3" stroke="#444"/>
<g fill="#444"><path d="M531 313v6h-6zM547 334v6h-6zM547 397v6h-6zM563 418v6h-6zM563 460v6h-6zM579 481v6h-6zM595 502v6h-6zM595 607v6h-6zM595 691v6h-6zM547 796v6h-6zM531 880v6h-6z"/></g>
<path d="M574.500 438.500l5 3.500-5 3.500z" stroke="#666"/>
<rect x="867" y="170" width="1.500" height="5" fill="#555"/><rect x="867" y="173.500" width="6" height="1.500" fill="#555"/>
<!-- horizontal ruler -->
<g font-family="Liberation Sans" font-size="9.500" fill="#555" text-anchor="middle">
<text x="954" y="173">6</text><text x="979" y="173">4</text><text x="1004" y="173">2</text><text x="1055" y="173">2</text><text x="1105" y="173">6</text><text x="1130" y="173">8</text><text x="1155" y="173">10</text><text x="1180" y="173">12</text><text x="1205" y="173">14</text><text x="1230" y="173">16</text><text x="1280" y="173">20</text><text x="1305" y="173">22</text><text x="1330" y="173">24</text><text x="1356" y="173">26</text><text x="1381" y="173">28</text><text x="1406" y="173">30</text><text x="1431" y="173">32</text><text x="1456" y="173">34</text><text x="1481" y="173">36</text><text x="1506" y="173">38</text><text x="1527" y="173">40</text><text x="1556" y="173">42</text><text x="1581" y="173">44</text><text x="1606" y="173">46</text><text x="1631" y="173">48</text>
</g>
<path fill="url(#h)" d="M1025 165h9v11h-9zM1253 165h9v11h-9zM1339 165h9v11h-9zM1463 165h9v11h-9zM1530 165h9v11h-9z"/>
<path d="M1076.500 161.500h9v4l-4.500 4-4.500-4zM1076.500 181.500h9v-5l-4.500-4-4.500 4zM1076.500 181.500h9v6h-9z" fill="#f5f5f5" stroke="#888"/>
<path d="M1253.500 186.500v-6l4.500-4 4.500 4v6z" fill="#f5f5f5" stroke="#888"/>
<!-- vertical ruler -->
<path d="M870.500 199V985" stroke="#555" stroke-width="5" stroke-dasharray="1 17.650"/>
<rect x="861" y="272" width="17" height="7" fill="#c6c6c6"/><rect x="861" y="327" width="17" height="7" fill="#c6c6c6"/>
<g font-family="Liberation Sans" font-size="9.500" fill="#555" text-anchor="middle">
<text transform="translate(874 190) rotate(-90)">2</text><text transform="translate(874 228) rotate(-90)">4</text><text transform="translate(874 265) rotate(-90)">6</text><text transform="translate(874 303) rotate(-90)">8</text><text transform="translate(874 340) rotate(-90)">10</text><text transform="translate(874 377) rotate(-90)">12</text><text transform="translate(874 414) rotate(-90)">14</text><text transform="translate(874 451) rotate(-90)">16</text><text transform="translate(874 489) rotate(-90)">18</text><text transform="translate(874 526) rotate(-90)">20</text><text transform="translate(874 563) rotate(-90)">22</text><text transform="translate(874 601) rotate(-90)">24</text><text transform="translate(874 638) rotate(-90)">26</text><text transform="translate(874 675) rotate(-90)">28</text><text transform="translate(874 712) rotate(-90)">30</text><text transform="translate(874 749) rotate(-90)">32</text><text transform="translate(874 787) rotate(-90)">34</text><text transform="translate(874 824) rotate(-90)">36</text><text transform="translate(874 861) rotate(-90)">38</text><text transform="translate(874 898) rotate(-90)">40</text><text transform="translate(874 936) rotate(-90)">42</text><text transform="translate(874 973) rotate(-90)">44</text><text transform="translate(874 1010) rotate(-90)">46</text>
</g>
<!-- crop marks -->
<path d="M993 989.500h21.500V1010M1577 989.500h-21.500V1010M1719 989.500h21.500V1010M2302 989.500h-20.500V1010" stroke="#a8a8a8"/>
<!-- status icons -->
<path d="M749.500 1022.500h5l2 2v12l-2-1.500h-5zM763 1022.500h-5l-2 2" stroke="#666"/><path d="M760 1026l4 5M764 1026l-4 5" stroke="#666"/>
<circle cx="984" cy="1028" r="6" stroke="#444" stroke-dasharray="5 3"/><path d="M984 1028l6 8M990 1028l-6 8" stroke="#333" stroke-width="1.500"/>
<path d="M2134.500 1022.500l5 2 5-2 v12l-5 2-5-2zM2139.500 1024.500v12" stroke="#666"/><path d="M2136 1026h2M2136 1029h2M2136 1032h2M2141 1026h2M2141 1029h2M2141 1032h2" stroke="#2b6cb0"/>
<rect x="2175.500" y="1021.500" width="12" height="14" fill="#fff" stroke="#444"/><path d="M2177 1024h9M2177 1027h9M2177 1030h9M2177 1033h9" stroke="#444"/>
<path d="M2215.500 1021.500h9v14h-9z" stroke="#666"/><path d="M2217 1024h6M2217 1027h6M2217 1030h4" stroke="#666"/><circle cx="2225" cy="1032" r="3.500" fill="#f3f3f3" stroke="#2b6cb0"/>
<path d="M2247 1027.500h8M2260 1027.500h99M2364 1027.500h8M2368 1023.500v8" stroke="#444"/><rect x="2304" y="1021" width="4" height="14" fill="#444"/><path d="M2310.500 1024v7" stroke="#444"/>
</svg>
</body></html>
